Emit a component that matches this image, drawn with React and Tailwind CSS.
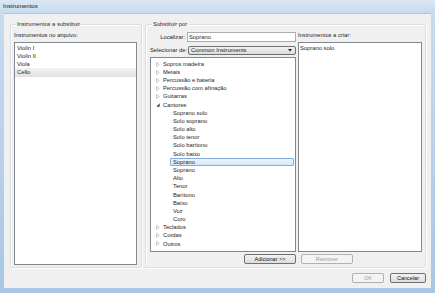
import React from "react";

const font = { fontFamily: '"Liberation Sans", Arial, sans-serif' };

const tree = [
  { label: "Sopros madeira" },
  { label: "Metais" },
  { label: "Percussão e bateria" },
  { label: "Percussão com afinação" },
  { label: "Guitarras" },
  {
    label: "Cantores",
    open: true,
    children: [
      "Soprano solo",
      "Solo soprano",
      "Solo alto",
      "Solo tenor",
      "Solo barítono",
      "Solo baixo",
      "Soprano",
      "Soprano",
      "Alto",
      "Tenor",
      "Barítono",
      "Baixo",
      "Voz",
      "Coro",
    ],
  },
  { label: "Teclados" },
  { label: "Cordas" },
  { label: "Outros" },
];

function Arrow({ open }) {
  if (open) {
    return (
      <svg width="4" height="4" viewBox="0 0 4 4" className="shrink-0">
        <path d="M3.7 0.3 L3.7 3.7 L0.3 3.7 Z" fill="#404040" />
      </svg>
    );
  }
  return (
    <svg width="4" height="5" viewBox="0 0 4 5" className="shrink-0">
      <path d="M0.5 0.5 L3.3 2.5 L0.5 4.5 Z" fill="none" stroke="#b0b0b0" strokeWidth="0.7" />
    </svg>
  );
}

function Button({ children, disabled, className = "" }) {
  return (
    <div
      className={
        "h-[10px] flex items-center justify-center rounded-[2px] border text-[5.5px] " +
        (disabled
          ? "border-[#adb2b5] bg-[#f4f4f4] text-[#9a9a9a] "
          : "border-[#707070] bg-gradient-to-b from-[#f2f2f2] to-[#dddddd] text-[#111] ") +
        className
      }
    >
      {children}
    </div>
  );
}

function Group({ title, className = "", children }) {
  return (
    <fieldset className={"border border-[#d5dfe5] rounded-[2px] shadow-[inset_1px_1px_0_#fff,1px_1px_0_#fff] " + className}>
      <legend className="ml-[2px] px-[1px] h-[8px] leading-[8px] text-[5.8px] text-[#1e1e1e]">{title}</legend>
      {children}
    </fieldset>
  );
}

export default function App() {
  let selectedDone = false;
  return (
    <div
      style={font}
      className="w-[435px] h-[293px] flex flex-col bg-gradient-to-b from-[#c9dcf0] to-[#a9c6e6] overflow-hidden"
    >
      {/* title bar */}
      <div className="h-[13px] flex items-center pl-[3px] text-[6px] text-[#1a1a1a] bg-gradient-to-b from-[#dbe7f4] to-[#c7daee]">
        Instrumentos
      </div>

      <div className="flex-1 mx-[4px] mb-[5px] bg-[#f0f0f0] border-t border-[#b4c4d6] flex flex-col pl-[6px] pr-[5px] pt-[6px] pb-[5px]">
        <div className="flex gap-[3px] flex-1">
          {/* left group */}
          <Group title="Instrumentos a substituir" className="w-[132px] flex flex-col pl-[3px] pr-[4px] pb-[2px]">
            <div className="mt-[3px] h-[8px] leading-[8px] text-[5.8px] text-[#1e1e1e]">Instrumentos no arquivo:</div>
            <div className="mt-[3px] flex-1 border border-[#828790] bg-white pt-[0.5px]">
              {["Violin I", "Violin II", "Viola", "Cello"].map((t, i) => (
                <div
                  key={t}
                  className={
                    "h-[8.3px] leading-[8.3px] pl-[2px] text-[5.8px] text-[#1e1e1e] " +
                    (i === 3 ? "bg-gradient-to-b from-[#f2f2f2] to-[#e2e2e2]" : "")
                  }
                >
                  {t}
                </div>
              ))}
            </div>
          </Group>

          {/* right group */}
          <Group title="Substituir por" className="flex-1 flex flex-col pl-[4px] pr-[3px] pb-[3px]">
            <div className="flex-1 flex gap-[2px]">
              <div className="w-[146px] flex flex-col">
                <div className="mt-[4px] h-[10px] flex items-center">
                  <div className="w-[37px] pr-[2px] text-right text-[5.8px] text-[#1e1e1e]">Localizar:</div>
                  <div className="flex-1 h-full border border-[#abadb3] bg-white flex items-center pl-[1px] text-[5.8px] text-[#1e1e1e]">
                    Soprano
                  </div>
                </div>
                <div className="mt-[4px] h-[9px] flex items-center">
                  <div className="w-[38px] pr-[2px] text-left text-[5.8px] text-[#1e1e1e] whitespace-nowrap">Selecionar de:</div>
                  <div className="flex-1 h-full border border-[#707070] rounded-[2px] bg-gradient-to-b from-[#f2f2f2] to-[#dcdcdc] flex items-center pl-[2px] pr-[3px] text-[5.8px] text-[#1e1e1e]">
                    <span className="flex-1">Common Instruments</span>
                    <svg width="4" height="3" viewBox="0 0 4 3">
                      <path d="M0 0 L4 0 L2 2.5 Z" fill="#222" />
                    </svg>
                  </div>
                </div>
                <div className="mt-[2px] flex-1 border border-[#828790] bg-white pt-[2px] pr-[1px]">
                  {tree.map((n) => (
                    <React.Fragment key={n.label}>
                      <div className="h-[8.18px] flex items-center pl-[5px] gap-[3px] text-[5.8px] text-[#1e1e1e]">
                        <Arrow open={n.open} />
                        <span>{n.label}</span>
                      </div>
                      {n.children &&
                        n.children.map((c, i) => {
                          const sel = c === "Soprano" && !selectedDone;
                          if (sel) selectedDone = true;
                          return (
                            <div key={c + i} className="h-[8.18px] flex items-center pl-[19px] text-[5.8px] text-[#1e1e1e]">
                              <span
                                className={
                                  "flex-1 h-full flex items-center pl-[2px] " +
                                  (sel ? "bg-gradient-to-b from-[#eaf3fd] to-[#d5e7fb] border border-[#84acdd] rounded-[1px]" : "pl-[3px]")
                                }
                              >
                                {c}
                              </span>
                            </div>
                          );
                        })}
                    </React.Fragment>
                  ))}
                </div>
              </div>

              <div className="flex-1 flex flex-col">
                <div className="mt-[3px] h-[8px] leading-[8px] text-[5.8px] text-[#1e1e1e]">Instrumentos a criar:</div>
                <div className="mt-[3px] flex-1 border border-[#828790] bg-white pt-[1px] pl-[1px]">
                  <div className="h-[8.3px] leading-[8.3px] text-[5.8px] text-[#1e1e1e]">Soprano solo</div>
                </div>
              </div>
            </div>

            <div className="mt-[2px] flex gap-[4px]">
              <div className="w-[146px] flex justify-end">
                <Button className="w-[52px]">Adicionar &gt;&gt;</Button>
              </div>
              <Button disabled className="w-[52px] ml-[1px]">Remover</Button>
            </div>
          </Group>
        </div>

        <div className="mt-[5px] flex justify-end gap-[6px]">
          <Button disabled className="w-[32px]">OK</Button>
          <Button className="w-[36px]">Cancelar</Button>
        </div>
      </div>
    </div>
  );
}
